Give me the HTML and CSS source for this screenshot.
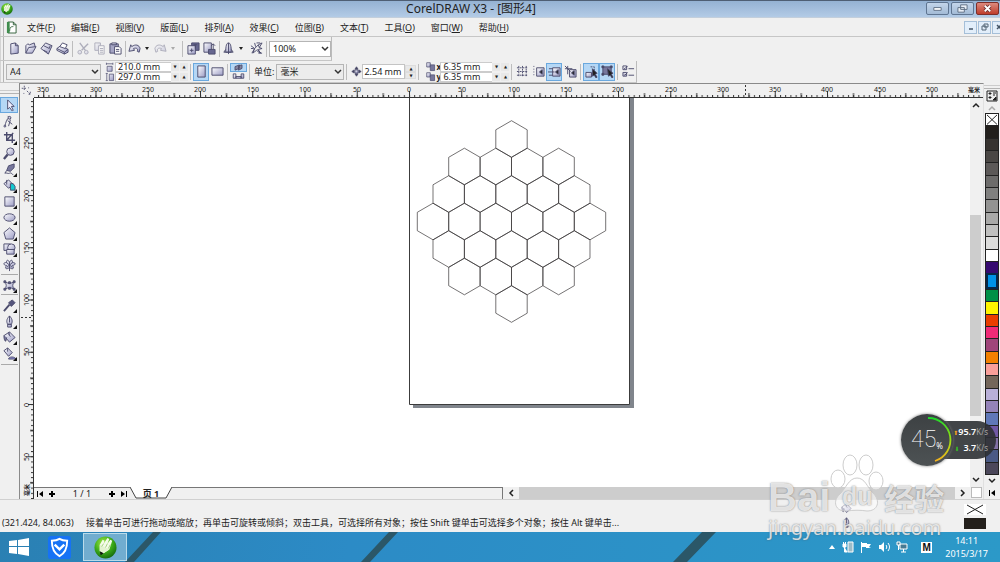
FILE: index.html
```html
<!DOCTYPE html>
<html lang="zh-CN">
<head>
<meta charset="utf-8">
<meta name="viewport" content="width=device-width, initial-scale=1">
<title>CorelDRAW X3 - [图形4]</title>
<link rel="stylesheet" href="styles.css">
</head>
<body>
<svg class="defs" aria-hidden="true">
  <defs>
    <linearGradient id="metal" x1="0" y1="0" x2="1" y2="1"><stop offset="0" stop-color="#fff"/><stop offset="1" stop-color="#9a9ac4"/></linearGradient>
    <radialGradient id="green" cx=".4" cy=".3" r=".8"><stop offset="0" stop-color="#a6e84a"/><stop offset=".5" stop-color="#3fae1c"/><stop offset="1" stop-color="#0c5c08"/></radialGradient>
    <linearGradient id="arc" x1="0" y1="0" x2="0" y2="1"><stop offset="0" stop-color="#1fd62c"/><stop offset=".5" stop-color="#9be012"/><stop offset="1" stop-color="#f5b11d"/></linearGradient>
  </defs>
  <symbol id="corel" viewBox="0 0 24 24"><circle cx="12" cy="12" r="11.5" fill="url(#green)"/><path d="M6 9l3-5 2 1-1 3 4-6 2 1-2 5 3-4 2 1-3 9-6 4-4-2z" fill="#f4fbe9"/><path d="M6 9l10 5-6 4-4-2z" fill="#e3f3d0"/><path d="M10 8l-2 3M14 8l-2 4M17 9l-2 4" stroke="#7fbf4f" stroke-width=".7"/><path d="M6 16l4 2-3 2z" fill="#111"/></symbol>
  <symbol id="doc" viewBox="0 0 12 14"><path d="M2 1h6l3 3v9H2z" fill="#fff" stroke="#2c5c34"/><path d="M8 1v3h3M4 11c0-4 1-5 4-5" fill="none" stroke="#2c5c34"/><path d="M1 1h3v12H1z" fill="#3f8c4d"/></symbol>
  <symbol id="chev" viewBox="0 0 8 8"><path d="M1 2l3 3 3-3" fill="none" stroke="currentColor" stroke-width="1.5"/></symbol>
  <symbol id="new" viewBox="0 0 14 14"><path d="M3 2l5-1 3 3v8l-8 1z"/><path d="M8 1v3h3" fill="none"/></symbol>
  <symbol id="open" viewBox="0 0 14 14"><path d="M2 12V4l2-2 2 1 5-2 1 4"/><path d="M2 12L5 6l8-1-4 7z"/></symbol>
  <symbol id="save" viewBox="0 0 14 14"><path d="M1 7l5-6 7 3-4 9z"/><path d="M4 4l6 3 1-3M4 9l4 2" fill="none"/></symbol>
  <symbol id="print" viewBox="0 0 14 14"><path d="M1 7l4-3 8 4v3l-4 2-8-4z"/><path d="M4 5l3-4 5 2-2 4z" fill="#fff"/><path d="M1 7l8 4 4-3M9 11v2" fill="none"/></symbol>
  <symbol id="cut" viewBox="0 0 14 14"><path d="M3 1l6 8M12 2L5 9" fill="none" stroke-width="1.500"/><circle cx="3" cy="11" r="2"/><circle cx="10" cy="11" r="2"/></symbol>
  <symbol id="copy" viewBox="0 0 14 14"><path d="M2 1h6v8H2z"/><path d="M6 4h6v9H6z" fill="#fff"/><path d="M7.500 7H11M7.500 9H11M7.500 11H11"/></symbol>
  <symbol id="paste" viewBox="0 0 14 14"><path d="M1 2h9v10H1z" fill="#a5a5c4"/><path d="M3 1h5v2H3z"/><path d="M6 5h5l2 2v6H6z" fill="#fff"/><path d="M7.500 8H11M7.500 10H11"/></symbol>
  <symbol id="undo" viewBox="0 0 14 14"><path d="M1 10l2-7 1 2c4-3 8-2 9 2l-1 4-2-1c1-3-1-4-4-3l1 2z"/></symbol>
  <symbol id="redo" viewBox="0 0 14 14"><path d="M13 10l-2-7-1 2C6 2 2 3 1 7l1 4 2-1C3 7 5 6 8 7l-1 2z"/></symbol>
  <symbol id="import" viewBox="0 0 14 14"><path d="M5 1h8v8H5z" fill="#66668f"/><path d="M1 4h8v9H1z"/><path d="M3 9h4M5 7v4M7 3h4M9 3v4" fill="none"/></symbol>
  <symbol id="export" viewBox="0 0 14 14"><path d="M1 1h8v10H1z"/><path d="M6 8h7v5H6z" fill="#66668f"/><path d="M11 8V2M9 4l2-2 2 2" fill="none"/></symbol>
  <symbol id="launch" viewBox="0 0 14 14"><path d="M4 11C4 4 5 1 7 1s3 3 3 10z"/><path d="M7 1v10M4 8l-2 3h10l-2-3M7 11v2" fill="none"/></symbol>
  <symbol id="web" viewBox="0 0 14 14"><path d="M1 4l4 3-3 5M5 1l1 4M5 7l4-4 4-2-3 5 3 1-4 1 2 4-4-3-4 3zM9 3l1 3M8 8l4 4M1 7h3M7 1h4M9 12h4" fill="none"/></symbol>
  <symbol id="pw" viewBox="0 0 14 14"><path d="M2 1v3M11 1v3M2 2.500h9M3 6h7v7H3z"/></symbol>
  <symbol id="ph" viewBox="0 0 14 14"><path d="M1 2h3M1 12h3M2.500 2v10M6 3h6v9H6z"/></symbol>
  <symbol id="portrait" viewBox="0 0 14 14"><path d="M3 1h8v12H3z"/></symbol>
  <symbol id="landscape" viewBox="0 0 14 14"><path d="M1 3h12v8H1z"/></symbol>
  <symbol id="pages1" viewBox="0 0 14 8"><path d="M3 3l5-2v4L3 7zM7 2l4-1v4L7 7z" fill="#85859f"/></symbol>
  <symbol id="pages2" viewBox="0 0 14 8"><path d="M1 1h3v5H1zM10 1h3v5h-3zM4 4h6v2H4z"/></symbol>
  <symbol id="nudge" viewBox="0 0 14 14"><path d="M5 5h4v4H5z"/><path d="M7 1l2 3H5zM7 13l2-3H5zM1 7l3-2v4zM13 7l-3-2v4z" fill="#44445c"/></symbol>
  <symbol id="dup" viewBox="0 0 14 14"><path d="M1 1h5v6H1z"/><path d="M6 4h6v8H6z" fill="#77779c"/></symbol>
  <symbol id="grid" viewBox="0 0 14 14"><path d="M3 1v12M7 1v12M11 1v12M1 3h12M1 7h12M1 11h12" fill="none" stroke-dasharray="2 1"/></symbol>
  <symbol id="snapg" viewBox="0 0 14 14"><path d="M2 1v12" stroke-dasharray="1 2"/><path d="M5 3h8v9H5z"/><path d="M11 5v5L8 7.500z" fill="#222"/></symbol>
  <symbol id="snapo" viewBox="0 0 14 14"><path d="M5 3h8v9H5z"/><path d="M11 5v5L8 7.500z" fill="#222"/><path d="M1 4h4M0 7.500h7M1 11h4" fill="none"/></symbol>
  <symbol id="dyn" viewBox="0 0 14 14"><path d="M6 5h7v8H6z"/><path d="M11 6v5L8 8.500z" fill="#222"/><path d="M4 1v9M1 4h8M1 1l6 6" fill="none"/></symbol>
  <symbol id="treat" viewBox="0 0 14 14"><path d="M1 8h6v5H1z"/><path d="M6 2h4v5" fill="none" stroke-dasharray="2 1"/><path d="M8 4l5 5-2 1 2 3-1 1-2-3-2 1z" fill="#222"/></symbol>
  <symbol id="outl" viewBox="0 0 14 14"><path d="M2 2h9v8H2z" fill="#77779c"/><path d="M1 1h2v2H1zM10 1h2v2h-2zM1 9h2v2H1z" fill="#44445c"/><path d="M7 4l6 5-2 1 2 3-1 1-2-3-2 1z" fill="#222"/></symbol>
  <symbol id="opts" viewBox="0 0 14 14"><path d="M1 1h4v4H1zM1 8h4v4H1zM7 4h6M7 11h6M2 3l1 1 3-3M2 10l1 1 3-3"/></symbol>
  <symbol id="pick" viewBox="0 0 14 14"><path d="M5 1v10l2-2 3 4 1-1-2-4h3z" fill="#eef"/></symbol>
  <symbol id="shape" viewBox="0 0 14 14"><path d="M2 12C3 8 4 4 7 2M5 1l3 3M5 6l5 4M8 5l-2 7" fill="none"/><circle cx="2" cy="12" r="1"/><circle cx="7" cy="3" r="1.500"/></symbol>
  <symbol id="crop" viewBox="0 0 14 14"><path d="M4 1v9h9M1 4h9v9M4 10l7-8" fill="none" stroke-width="1.500"/></symbol>
  <symbol id="zoom" viewBox="0 0 14 14"><path d="M5 8l-4 5" stroke-width="2.500"/><circle cx="8" cy="5" r="4"/></symbol>
  <symbol id="free" viewBox="0 0 14 14"><path d="M12 1L6 3 4 8l4 1 4-4z" fill="#77779c"/><path d="M4 8l-2 3c2-1 3 1 5 0s3 1 4 2" fill="none"/></symbol>
  <symbol id="smart" viewBox="0 0 14 14"><path d="M1 5l5-4 5 5-5 4z"/><path d="M8 5h3l2 3v4H8z" fill="#13c9d0"/><path d="M4 1v5" fill="none"/></symbol>
  <symbol id="rect" viewBox="0 0 14 14"><path d="M2 2h10v10H2z"/></symbol>
  <symbol id="ell" viewBox="0 0 14 14"><ellipse cx="7" cy="7" rx="6" ry="4"/></symbol>
  <symbol id="poly" viewBox="0 0 14 14"><path d="M7 1l6 5-2 7H3L1 6z"/></symbol>
  <symbol id="basic" viewBox="0 0 14 14"><path d="M1 1h7v7H1z"/><circle cx="9" cy="5" r="4"/><path d="M4 7h8v5H4z"/></symbol>
  <symbol id="flower" viewBox="0 0 14 14"><path d="M7 4c-1-4-4-3-3 0-4-1-4 3 0 3-3 3 0 5 3 2 3 3 6 1 3-2 4 0 4-4 0-3 1-3-2-4-3 0zM7 4v9M4 4l6 5M10 4L4 9"/></symbol>
  <symbol id="env" viewBox="0 0 14 14"><path d="M2 3c3 2 7 2 10 0-2 3-2 5 0 8-3-2-7-2-10 0 2-3 2-5 0-8z"/><path d="M1 2h2v2H1zM11 2h2v2h-2zM1 10h2v2H1zM11 10h2v2h-2zM6 3h2v2H6zM6 9h2v2H6z" fill="#66668a"/></symbol>
  <symbol id="drop" viewBox="0 0 14 14"><path d="M1 13l6-7" stroke-width="2"/><path d="M6 4l4-3 3 3-4 4z" fill="#55557c"/></symbol>
  <symbol id="pen" viewBox="0 0 14 14"><path d="M7 1c4 4 3 7 2 9H5C4 8 3 5 7 1zM7 1v7M5 10h4v3H5z"/></symbol>
  <symbol id="fill" viewBox="0 0 14 14"><path d="M1 5l6-4 6 6-6 5z"/><path d="M1 5c0 4 1 6 2 6l1-4M7 1c-2 2 0 4 1 5" fill="#77779c"/></symbol>
  <symbol id="ifill" viewBox="0 0 14 14"><path d="M1 4l4-3 5 5-4 4z"/><path d="M6 13c0-3 7-3 8 0z" fill="#8b8bd0"/><path d="M5 1v4" fill="none"/></symbol>
</svg>

<header class="titlebar">
  <svg class="logo"><use href="#corel"/></svg>
  <h1>CorelDRAW X3 - [图形4]</h1>
  <div class="winbtns">
    <button aria-label="最小化"><svg viewBox="0 0 12 12"><path d="M2 5h8v3H2z" fill="#fff" stroke="#5b6b80"/></svg></button>
    <button aria-label="还原"><svg viewBox="0 0 12 12"><path d="M4 2h7v5H4zM1 5h7v5H1z" fill="#e8eef6" stroke="#5b6b80"/></svg></button>
    <button class="close" aria-label="关闭"><svg viewBox="0 0 12 12"><path d="M3 3l6 6M9 3L3 9" stroke="#703030" stroke-width="4"/><path d="M3 3l6 6M9 3L3 9" stroke="#fff" stroke-width="2"/></svg></button>
  </div>
</header>

<nav class="menubar">
  <i class="grip"></i>
  <svg class="docicon"><use href="#doc"/></svg>
  <div class="menus">
    <button>文件(<u>F</u>)</button><button>编辑(<u>E</u>)</button><button>视图(<u>V</u>)</button><button>版面(<u>L</u>)</button><button>排列(<u>A</u>)</button><button>效果(<u>C</u>)</button><button>位图(<u>B</u>)</button><button>文本(<u>T</u>)</button><button>工具(<u>O</u>)</button><button>窗口(<u>W</u>)</button><button>帮助(<u>H</u>)</button>
  </div>
  <div class="docbtns">
    <button aria-label="最小化文档"><svg viewBox="0 0 10 10"><path d="M3 7h4" stroke="#456" stroke-width="1.500"/></svg></button>
    <button aria-label="还原文档"><svg viewBox="0 0 10 10"><path d="M4 2h4v3H4zM2 4h4v4H2z" fill="#dde9f5" stroke="#567"/></svg></button>
    <button aria-label="关闭文档"><svg viewBox="0 0 10 10"><path d="M3 3l4 4M7 3L3 7" stroke="#456" stroke-width="1.500"/></svg></button>
  </div>
</nav>

<div class="toolbar standard">
  <i class="grip"></i>
  <button aria-label="新建"><svg class="ic"><use href="#new"/></svg></button>
  <button aria-label="打开"><svg class="ic"><use href="#open"/></svg></button>
  <button aria-label="保存"><svg class="ic"><use href="#save"/></svg></button>
  <button aria-label="打印"><svg class="ic"><use href="#print"/></svg></button>
  <i class="sep"></i>
  <button aria-label="剪切" disabled><svg class="ic"><use href="#cut"/></svg></button>
  <button aria-label="复制" disabled><svg class="ic"><use href="#copy"/></svg></button>
  <button aria-label="粘贴"><svg class="ic"><use href="#paste"/></svg></button>
  <i class="sep"></i>
  <button class="drop" aria-label="撤消"><svg class="ic"><use href="#undo"/></svg><i class="tri"></i></button>
  <button class="drop" aria-label="重做" disabled><svg class="ic"><use href="#redo"/></svg><i class="tri"></i></button>
  <i class="sep"></i>
  <button aria-label="导入"><svg class="ic"><use href="#import"/></svg></button>
  <button aria-label="导出"><svg class="ic"><use href="#export"/></svg></button>
  <i class="sep"></i>
  <button class="drop" aria-label="应用程序启动器"><svg class="ic"><use href="#launch"/></svg><i class="tri"></i></button>
  <button aria-label="在线社区"><svg class="ic"><use href="#web"/></svg></button>
  <i class="sep"></i>
  <span class="combo white zoomlevel"><select aria-label="缩放级别"><option>100%</option></select><svg><use href="#chev"/></svg></span>
</div>

<div class="toolbar props">
  <i class="grip"></i>
  <span class="combo paper"><select aria-label="纸张类型"><option>A4</option></select><svg><use href="#chev"/></svg></span>
  <div class="pair">
    <label><svg class="ic"><use href="#pw"/></svg><input aria-label="纸张宽度" value="210.0 mm"><span class="spin"><b>▼</b><b>▲</b></span></label>
    <label><svg class="ic"><use href="#ph"/></svg><input aria-label="纸张高度" value="297.0 mm"><span class="spin"><b>▼</b><b>▲</b></span></label>
  </div>
  <i class="sep"></i>
  <button class="on" aria-label="纵向"><svg class="ic"><use href="#portrait"/></svg></button>
  <button aria-label="横向"><svg class="ic"><use href="#landscape"/></svg></button>
  <i class="sep"></i>
  <div class="stack">
    <button class="on" aria-label="所有页面"><svg class="ic"><use href="#pages1"/></svg></button>
    <button aria-label="当前页面"><svg class="ic"><use href="#pages2"/></svg></button>
  </div>
  <i class="sep"></i>
  <label class="unitlabel" for="unit">单位:</label>
  <span class="combo unit"><select id="unit"><option>毫米</option></select><svg><use href="#chev"/></svg></span>
  <i class="sep"></i>
  <label class="nudge"><svg class="ic"><use href="#nudge"/></svg><input aria-label="微调偏移" value="2.54 mm"><span class="spin tall"><b>▲</b><b>▼</b></span></label>
  <i class="sep"></i>
  <div class="pair dup">
    <label><svg class="ic"><use href="#dup"/></svg><em>x</em><input aria-label="再制距离 x" value="6.35 mm"><span class="spin"><b>▼</b><b>▲</b></span></label>
    <label><svg class="ic"><use href="#dup"/></svg><em>y</em><input aria-label="再制距离 y" value="6.35 mm"><span class="spin"><b>▼</b><b>▲</b></span></label>
  </div>
  <i class="sep"></i>
  <button aria-label="贴齐网格"><svg class="ic"><use href="#grid"/></svg></button>
  <button aria-label="贴齐辅助线"><svg class="ic"><use href="#snapg"/></svg></button>
  <button class="on" aria-label="贴齐对象"><svg class="ic"><use href="#snapo"/></svg></button>
  <button aria-label="动态导线"><svg class="ic"><use href="#dyn"/></svg></button>
  <i class="sep"></i>
  <button class="on" aria-label="移动时绘制"><svg class="ic"><use href="#treat"/></svg></button>
  <button class="on" aria-label="视为已填充"><svg class="ic"><use href="#outl"/></svg></button>
  <i class="sep"></i>
  <button aria-label="选项"><svg class="ic"><use href="#opts"/></svg></button>
</div>

<main class="work">
  <aside class="toolbox">
    <i class="hgrip"></i>
    <button class="on" aria-label="挑选"><svg class="ic"><use href="#pick"/></svg></button>
    <button class="fly" aria-label="形状"><svg class="ic"><use href="#shape"/></svg></button>
    <button class="fly" aria-label="裁剪"><svg class="ic"><use href="#crop"/></svg></button>
    <button class="fly" aria-label="缩放"><svg class="ic"><use href="#zoom"/></svg></button>
    <button class="fly" aria-label="手绘"><svg class="ic"><use href="#free"/></svg></button>
    <button class="fly" aria-label="智能填充"><svg class="ic"><use href="#smart"/></svg></button>
    <button class="fly" aria-label="矩形"><svg class="ic"><use href="#rect"/></svg></button>
    <button class="fly" aria-label="椭圆"><svg class="ic"><use href="#ell"/></svg></button>
    <button class="fly" aria-label="多边形"><svg class="ic"><use href="#poly"/></svg></button>
    <button class="fly" aria-label="基本形状"><svg class="ic"><use href="#basic"/></svg></button>
    <button aria-label="文本"><svg class="ic"><use href="#flower"/></svg></button>
    <i class="hsep"></i>
    <button class="fly" aria-label="交互式封套"><svg class="ic"><use href="#env"/></svg></button>
    <i class="hsep"></i>
    <button class="fly" aria-label="滴管"><svg class="ic"><use href="#drop"/></svg></button>
    <button class="fly" aria-label="轮廓"><svg class="ic"><use href="#pen"/></svg></button>
    <button class="fly" aria-label="填充"><svg class="ic"><use href="#fill"/></svg></button>
    <button class="fly" aria-label="交互式填充"><svg class="ic"><use href="#ifill"/></svg></button>
    <i class="hsep last"></i>
  </aside>

  <section class="frame">
    <div class="corner"><svg class="ic" viewBox="0 0 14 14"><path d="M2 5h6M5 2v6M8 8l4 4M12 9v3H9M10 4v1M4 11h1" fill="none" stroke-dasharray="2 1"/></svg></div>
    <svg class="hruler" role="img" aria-label="水平标尺">
      <defs>
        <pattern id="hminor" x="375" width="5.225" height="14" patternUnits="userSpaceOnUse"><path d="M.5 11v3" stroke="#333"/></pattern>
        <pattern id="hmajor" x="375" width="52.250" height="14" patternUnits="userSpaceOnUse"><path d="M.5 7v7M26.500 9v5" stroke="#333"/></pattern>
      </defs>
      <rect width="100%" height="14" fill="url(#hminor)"/><rect width="100%" height="14" fill="url(#hmajor)"/>
      <path d="M711.500 1v13" stroke="#333" stroke-dasharray="2 2"/>
      <g class="ticks"><text x="9" y="8">350</text><text x="62" y="8">300</text><text x="114" y="8">250</text><text x="166" y="8">200</text><text x="219" y="8">150</text><text x="271" y="8">100</text><text x="323" y="8">50</text><text x="375" y="8">0</text><text x="428" y="8">50</text><text x="480" y="8">100</text><text x="532" y="8">150</text><text x="584" y="8">200</text><text x="637" y="8">250</text><text x="689" y="8">300</text><text x="741" y="8">350</text><text x="793" y="8">400</text><text x="846" y="8">450</text><text x="898" y="8">500</text><text class="rulerunit" x="940" y="8">毫米</text></g>
    </svg>
    <svg class="vruler" role="img" aria-label="垂直标尺">
      <defs>
        <pattern id="vminor" y="306" width="14" height="5.225" patternUnits="userSpaceOnUse"><path d="M11 .5h3" stroke="#333"/></pattern>
        <pattern id="vmajor" y="306" width="14" height="52.250" patternUnits="userSpaceOnUse"><path d="M8 .5h6M10 26.500h4" stroke="#333"/></pattern>
      </defs>
      <rect width="14" height="100%" fill="url(#vminor)"/><rect width="14" height="100%" fill="url(#vmajor)"/>
      <path d="M1 219.500h13" stroke="#333" stroke-dasharray="2 2"/>
      <g class="ticks"><text transform="translate(9 45) rotate(-90)">250</text><text transform="translate(9 98) rotate(-90)">200</text><text transform="translate(9 150) rotate(-90)">150</text><text transform="translate(9 202) rotate(-90)">100</text><text transform="translate(9 254) rotate(-90)">50</text><text transform="translate(9 307) rotate(-90)">0</text><text transform="translate(9 359) rotate(-90)">50</text><text class="rulerunit" transform="translate(9 392) rotate(-90)">毫米</text></g>
    </svg>
    <svg class="canvas" role="img" aria-label="蜂窝六边形图案">
      <path d="M595 0h5v310H379v-4h216z" fill="#80858c"/>
      <path d="M375.500-1V306.500H595.500V-1" fill="#fff" stroke="#3c3c3c"/>
      <defs><path id="h" d="M0-18.300L15.700-9.200V9.200L0 18.300-15.700 9.200V-9.200z" fill="none" stroke="#3a3638" stroke-width=".7"/></defs>
      <use href="#h" x="477.500" y="41"/>
      <use href="#h" x="430.400" y="68.500"/><use href="#h" x="461.800" y="68.500"/><use href="#h" x="493.200" y="68.500"/><use href="#h" x="524.600" y="68.500"/>
      <use href="#h" x="414.700" y="96"/><use href="#h" x="446.100" y="96"/><use href="#h" x="477.500" y="96"/><use href="#h" x="508.900" y="96"/><use href="#h" x="540.300" y="96"/>
      <use href="#h" x="399" y="123.500"/><use href="#h" x="430.400" y="123.500"/><use href="#h" x="461.800" y="123.500"/><use href="#h" x="493.200" y="123.500"/><use href="#h" x="524.600" y="123.500"/><use href="#h" x="556" y="123.500"/>
      <use href="#h" x="414.700" y="151"/><use href="#h" x="446.100" y="151"/><use href="#h" x="477.500" y="151"/><use href="#h" x="508.900" y="151"/><use href="#h" x="540.300" y="151"/>
      <use href="#h" x="430.400" y="178.500"/><use href="#h" x="461.800" y="178.500"/><use href="#h" x="493.200" y="178.500"/><use href="#h" x="524.600" y="178.500"/>
      <use href="#h" x="477.500" y="206"/>
    </svg>
    <div class="vscroll">
      <button aria-label="向上滚动"><svg class="flip"><use href="#chev"/></svg></button>
      <div class="track"><i></i></div>
      <button aria-label="向下滚动"><svg><use href="#chev"/></svg></button>
    </div>
    <div class="pagebar">
      <div class="pagenav">
        <button aria-label="首页"><svg viewBox="0 0 8 8"><path d="M1 1h1v6H1zM7 1v6L3 4z"/></svg></button>
        <button aria-label="前面加页"><svg viewBox="0 0 8 8"><path d="M3 1h2v2h2v2H5v2H3V5H1V3h2z"/></svg></button>
        <span>1 / 1</span>
        <button aria-label="后面加页"><svg viewBox="0 0 8 8"><path d="M3 1h2v2h2v2H5v2H3V5H1V3h2z"/></svg></button>
        <button aria-label="末页"><svg viewBox="0 0 8 8"><path d="M6 1h1v6H6zM1 1v6l4-3z"/></svg></button>
      </div>
      <button class="pagetab"><svg viewBox="0 0 42 12" preserveAspectRatio="none"><path d="M0 0h42l-6 11H6z" fill="#fff"/><path d="M0 0l6 11h30l6-11" fill="none" stroke="#444"/></svg><span>页 1</span></button>
      <i class="filler"></i>
      <button class="arrow" aria-label="向左滚动"><svg class="left"><use href="#chev"/></svg></button>
      <div class="htrack"></div>
      <button class="arrow" aria-label="向右滚动"><svg class="right"><use href="#chev"/></svg></button>
      <button class="navi" aria-label="导航器"></button>
    </div>
  </section>

  <aside class="palette">
    <i class="hgrip"></i>
    <button class="pmenu" aria-label="调色板菜单"><svg viewBox="0 0 12 12"><path d="M1 1h10v10H1z" fill="#eee" stroke="#222"/><path d="M3 3h2v1H3zM3 7h2v1H3zM7 3h3M7 5h2M7 10l3-3v3z" stroke="#222" fill="#222"/></svg></button>
    <button class="parrow dim" aria-label="上移"><svg class="flip"><use href="#chev"/></svg></button>
    <div class="swatches">
      <button class="none" aria-label="无颜色"><svg viewBox="0 0 12 12" preserveAspectRatio="none"><path d="M1 1l10 10M11 1L1 11" stroke="#222"/></svg></button>
      <i class="c1"></i><i class="c2"></i><i class="c3"></i><i class="c4"></i><i class="c5"></i><i class="c6"></i><i class="c7"></i><i class="c8"></i><i class="c9"></i><i class="c10"></i><i class="c11"></i><i class="c12"></i><i class="c13"></i><i class="c14"></i><i class="c15"></i><i class="c16"></i><i class="c17"></i><i class="c18"></i><i class="c19"></i><i class="c20"></i><i class="c21"></i><i class="c22"></i><i class="c23"></i><i class="c24"></i><i class="c25"></i><i class="c26"></i><i class="c27"></i><i class="c28"></i>
    </div>
    <button class="parrow" aria-label="下移"><svg><use href="#chev"/></svg></button>
    <button class="parrow" aria-label="展开"><svg viewBox="0 0 8 8"><path d="M1 1h1v6H1zM7 1v6L3 4z"/></svg></button>
  </aside>
</main>

<footer class="status">
  <span class="coords">(321.424, 84.063)</span>
  <span class="hint">接着单击可进行拖动或缩放；再单击可旋转或倾斜；双击工具，可选择所有对象；按住 Shift 键单击可选择多个对象；按住 Alt 键单击...</span>
  <div class="inks"><svg class="ic"><use href="#fill"/></svg><svg class="ic"><use href="#pen"/></svg></div>
  <div class="fills"><svg viewBox="0 0 22 11"><path d="M0 0h22v11H0z" fill="#fff"/><path d="M3 1l16 9M19 1L3 10" stroke="#222"/></svg><i></i></div>
</footer>

<div class="taskbar">
  <svg class="stripes" aria-hidden="true"><path d="M153 0h8l-27 30h-9zM389 0h9l-28 30h-9zM702 0h14l-29 30h-14z" fill="#2b5768"/></svg>
  <button class="start" aria-label="开始"><svg viewBox="0 0 20 18"><path d="M0 3l8-1v6H0zM9 2l11-2v8H9zM0 9h8v7l-8-1zM9 9h11v9L9 16z" fill="#fff"/></svg></button>
  <button class="app" aria-label="安全卫士"><svg viewBox="0 0 24 24"><rect width="24" height="24" rx="3" fill="#1672f5"/><path d="M12 3c3 2 5 2 8 2 0 8-2 13-8 16C6 18 4 13 4 5c3 0 5 0 8-2z" fill="none" stroke="#fff" stroke-width="2"/><path d="M7 9l5 5 5-5" fill="none" stroke="#fff" stroke-width="2.500"/></svg></button>
  <button class="app active" aria-label="CorelDRAW"><svg><use href="#corel"/></svg></button>
  <div class="tray">
    <svg class="tiny" viewBox="0 0 8 8"><path d="M1 6l3-4 3 4z" fill="#fff"/></svg>
    <svg viewBox="0 0 12 12"><path d="M6 1h5v10H6z" fill="#9dbcc8" stroke="#fff"/><path d="M1 3h3v3H1zM2.500 6v5h3M1.500 1v2M3.500 1v2" fill="#fff" stroke="#fff"/></svg>
    <svg viewBox="0 0 12 12"><path d="M1.500 1v11" stroke="#fff"/><path d="M2 2h5v1h4L9 6l2 1H6V6H2z" fill="#fff"/></svg>
    <svg viewBox="0 0 12 12"><path d="M1 4h2l3-3v10L3 8H1z" fill="#fff"/><path d="M8 4c1 1 1 3 0 4M10 2c2 3 2 5 0 8" fill="none" stroke="#fff"/></svg>
    <svg viewBox="0 0 12 12"><path d="M4 3h7v5H4zM5 11h5M7.500 8v3M1 1h3v3H1zM2.500 4v5" fill="#477a92" stroke="#fff"/></svg>
    <span class="ime">M</span>
    <time><span>14:11</span><span>2015/3/17</span></time>
  </div>
</div>

<div class="gadget">
  <div class="dial"><svg viewBox="0 0 52 52" aria-hidden="true"><path d="M27 4A22 22 0 0 1 34 47" fill="none" stroke="url(#arc)" stroke-width="1.800"/></svg><strong>45</strong><small>%</small></div>
  <div class="speeds">
    <span><b class="up">⬆</b>95.7<small>K/s</small></span>
    <span><b class="down">⬇</b>3.7<small>K/s</small></span>
  </div>
</div>

<div class="watermark">
  <div class="brand">
    <span class="bai">Bai</span>
    <span class="paw"><svg viewBox="0 0 54 58" aria-hidden="true"><g fill="#fff" fill-opacity=".55" stroke="#cdcdcd"><ellipse cx="8" cy="25" rx="7" ry="9"/><ellipse cx="20" cy="11" rx="7" ry="10"/><ellipse cx="36" cy="11" rx="7" ry="10"/><ellipse cx="46" cy="27" rx="7" ry="9"/><path d="M27 24c8 0 10 9 16 15 8 8 5 18-6 18-6-1-14-1-20 0C5 58 2 47 10 40c6-6 9-16 17-16z"/></g></svg><span>du</span></span>
    <span class="jy">经验</span>
  </div>
  <div class="url">jingyan.baidu.com</div>
</div>
</body>
</html>
```
FILE: styles.css
```css
* { box-sizing: border-box; }
html, body { height: 100%; }
body {
  margin: 0;
  display: flex;
  flex-direction: column;
  position: relative;
  overflow: hidden;
  background: #f0f0f0;
  color: #222;
  font: 9px/12px "Noto Sans", "Noto Sans CJK SC", sans-serif;
}
button, input, select { font: inherit; color: inherit; margin: 0; padding: 0; border: 0; background: none; border-radius: 0; min-width: 0; }
button { display: flex; align-items: center; justify-content: center; }
select { appearance: none; outline: 0; }
svg { display: block; }
.defs { position: absolute; width: 0; height: 0; }
.ic { width: 13px; height: 13px; fill: url(#metal); stroke: #4b4b6c; stroke-width: 1; flex: none; }
button:disabled .ic { opacity: .4; }

.titlebar {
  flex: none;
  height: 18px;
  display: grid;
  grid-template-columns: 80px 1fr 80px;
  align-items: center;
  border-top: 1px solid #4f5f74;
  border-bottom: 1px solid #c3cfdc;
  background: linear-gradient(#95b2d3, #b3cbe6);
}
.logo { width: 12px; height: 12px; margin-left: 1px; }
.titlebar h1 { margin: 0; text-align: center; font-size: 12px; line-height: 16px; font-weight: 400; padding-right: 58px; }
.winbtns { display: flex; gap: 2px; justify-content: flex-end; align-self: start; padding: 1px 1px 0 0; }
.winbtns button { width: 23px; height: 13px; border: 1px solid #5f7591; border-radius: 2px; background: linear-gradient(#c3d5ea, #a3bbd6); }
.winbtns .close { background: linear-gradient(#dd8a7e, #bf3d2b); border-color: #7d2f2a; }
.winbtns svg { width: 11px; height: 11px; }

.menubar { flex: none; height: 19px; display: flex; align-items: center; border-bottom: 1px solid #c6c6c6; }
.grip { flex: none; width: 4px; align-self: stretch; border-left: 1px solid #d4d4d4; border-right: 1px solid #b4b4b4; }
.docicon { width: 11px; height: 13px; margin-left: 2px; }
.menus { flex: 1; display: flex; gap: 16px; margin-left: 10px; padding-top: 1px; }
.docbtns { display: flex; gap: 1px; overflow: hidden; width: 36px; }
.docbtns button { flex: none; width: 13px; height: 13px; border: 1px solid #a5bfd8; background: #e2eefa; }
.docbtns svg { width: 10px; height: 10px; }

.toolbar { flex: none; align-self: flex-start; display: flex; align-items: center; border-right: 1px solid #bbb; border-bottom: 1px solid #c6c6c6; }
.toolbar > button { width: 16px; height: 18px; flex: none; }
.toolbar .on, .toolbox .on { background: #b5d7f5; border: 1px solid #6aa8de; }
.toolbar .drop { width: 26px; gap: 4px; justify-content: flex-start; }
.sep { flex: none; width: 1px; height: 16px; margin: 0 2px; background: #bdbdbd; }
.tri { border: 2px solid transparent; border-top: 3px solid #222; border-bottom: 0; }
button:disabled .tri { border-top-color: #aaa; }
.standard { height: 24px; }
.standard .grip { margin-right: 2px; }
.combo { display: grid; align-items: center; border: 1px solid #b5b5b5; background: #ececec; height: 16px; flex: none; }
.combo select { grid-area: 1 / 1; width: 100%; height: 14px; padding-left: 3px; line-height: 14px; }
.combo svg { grid-area: 1 / 1; justify-self: end; width: 8px; height: 8px; margin-right: 1px; color: #333; pointer-events: none; }
.white { background: #fff; }
.zoomlevel { width: 62px; }
.props { height: 22px; }
.props .grip { margin-right: 2px; }
.paper { width: 95px; margin-right: 4px; }
.unit { width: 68px; }
.unitlabel { padding: 0 2px; }
.pair { display: flex; flex-direction: column; }
.pair label, .nudge { display: flex; align-items: center; }
.pair .ic { width: 10px; height: 10px; }
.pair input { width: 56px; height: 10px; padding-left: 2px; background: #fff; border: 1px solid #ccc; border-right: 0; line-height: 8px; }
.dup { margin-left: 5px; }
.dup em { width: 4px; font: 700 8px/8px "Noto Sans", sans-serif; }
.dup input { width: 52px; }
.spin { display: flex; gap: 1px; }
.spin b { width: 8px; height: 8px; font: 4px/8px "DejaVu Sans", sans-serif; text-align: center; background: #e8e8e8; }
.stack { display: flex; flex-direction: column; }
.stack button { width: 17px; height: 9px; }
.stack .ic { width: 13px; height: 7px; }
.nudge { margin-left: 2px; }
.nudge .ic { width: 11px; height: 11px; }
.nudge input { width: 43px; height: 15px; padding-left: 1px; background: #fff; border: 1px solid #c4c4c4; }
.nudge .spin { flex-direction: column; gap: 0; }
.nudge .spin b { width: 11px; height: 7px; border: 1px solid #ddd; line-height: 5px; }

.work { flex: 1; min-height: 0; display: flex; border-bottom: 1px solid #d0d0d0; }
.toolbox { flex: none; width: 19px; display: flex; flex-direction: column; padding-top: 7px; }
.hgrip { flex: none; height: 4px; border-top: 1px solid #ccc; border-bottom: 1px solid #b4b4b4; }
.toolbox .hgrip { margin-bottom: 3px; }
.toolbox button { position: relative; flex: none; width: 18px; height: 16px; }
.fly::after { content: ""; position: absolute; right: 1px; bottom: 0; border: 2px solid #111; border-top-color: transparent; border-left-color: transparent; }
.hsep { flex: none; height: 1px; margin: 1px 1px 2px; background: #aaa; }
.last { margin-top: 3px; }

.frame {
  flex: 1;
  min-width: 0;
  display: grid;
  grid-template: 14px 1fr 12px / 14px 1fr 13px;
  border: 1px solid #8a8a8a;
  border-right-color: #e0e0e0;
  border-bottom: 0;
}
.corner .ic { width: 12px; height: 12px; }
.hruler { grid-column: 2 / 4; width: 100%; height: 14px; border-bottom: 1px solid #333; }
.vruler { grid-row: 2 / 4; grid-column: 1; width: 14px; height: 100%; border-right: 1px solid #333; }
.ticks { font: 7px "Noto Sans", "Noto Sans CJK SC", sans-serif; text-anchor: middle; fill: #222; }
.rulerunit { font-size: 6px; font-weight: 700; }
.canvas { grid-area: 2 / 2; width: 100%; height: 100%; background: #fff; overflow: hidden; }
.vscroll { grid-area: 2 / 3; display: flex; flex-direction: column; width: 11px; }
.vscroll button { height: 14px; }
.vscroll svg, .parrow svg { width: 8px; height: 8px; }
.flip { transform: rotate(180deg); }
.left { transform: rotate(90deg); }
.right { transform: rotate(-90deg); }
.track { flex: 1; display: grid; grid-template-rows: 103fr 200fr 57fr; }
.track i { grid-row: 2; background: #cdcdcd; }
.pagebar { grid-area: 3 / 2 / 4 / 4; display: flex; min-width: 0; }
.pagenav { flex: none; display: flex; align-items: center; border-top: 1px solid #777; width: 96px; }
.pagenav button { width: 12px; height: 10px; }
.pagenav svg { width: 8px; height: 8px; }
.pagenav span { flex: 1; text-align: center; }
.pagetab { flex: none; display: grid; width: 42px; height: 12px; font-weight: 700; }
.pagetab svg { grid-area: 1 / 1; width: 42px; height: 12px; }
.pagetab span { grid-area: 1 / 1; line-height: 11px; z-index: 1; }
.filler { flex: 331; border-top: 1px solid #777; border-right: 1px solid #777; }
.arrow { flex: none; width: 16px; }
.arrow svg { width: 8px; height: 8px; }
.htrack { flex: 438; background: #cdcdcd; }
.navi { flex: none; width: 11px; height: 11px; background: #fff; border: 1px solid #bbb; margin-right: 1px; }

.palette { flex: none; width: 16px; display: flex; flex-direction: column; padding-top: 2px; }
.pmenu { height: 13px; }
.pmenu svg { width: 12px; height: 12px; }
.parrow { height: 12px; }
.parrow.dim { height: 11px; color: #aaa; }
.swatches { flex: 1; display: flex; flex-direction: column; margin: 0 1px; border: 1px solid #222; border-top: 0; }
.swatches > * { flex: 1; min-height: 0; border-top: 1px solid #222; }
.none { background: #fff; }
.none svg { width: 100%; height: 100%; }
.c1 { background: #221f1c; } .c2 { background: #373330; } .c3 { background: #4a4745; } .c4 { background: #5c5958; }
.c5 { background: #6d6c6b; } .c6 { background: #80807f; } .c7 { background: #939392; } .c8 { background: #a9a9a8; }
.c9 { background: #c0c0bf; } .c10 { background: #dcdcdb; } .c11 { background: #fff; } .c12 { background: #360a70; }
.swatches .c13 { background: #0091e6; border: 2px solid #06284a; } .c14 { background: #009047; } .c15 { background: #fff500; } .c16 { background: #ea3e00; }
.c17 { background: #f02a77; } .c18 { background: #a0457a; } .c19 { background: #f28000; } .c20 { background: #f99f9a; }
.c21 { background: #74665a; } .c22 { background: #b9b0d8; } .c23 { background: #9483b8; } .c24 { background: #6078b8; }
.c25 { background: #7058a5; } .c26 { background: #8070a5; } .c27 { background: #4a5a85; } .c28 { background: #4b475a; }

.status { flex: none; height: 32px; display: flex; align-items: flex-end; padding: 0 14px 2px 2px; }
.coords { flex: none; width: 84px; line-height: 14px; }
.hint { flex: none; line-height: 14px; white-space: nowrap; }
.inks { display: flex; flex-direction: column; gap: 3px; margin: 0 112px 2px auto; }
.inks .ic { width: 11px; height: 11px; }
.fills { display: flex; flex-direction: column; gap: 3px; width: 22px; padding-bottom: 1px; }
.fills svg, .fills i { width: 22px; height: 11px; }
.fills i { background: #231f1b; }

.taskbar { flex: none; height: 30px; position: relative; display: flex; align-items: center; background: linear-gradient(100deg, #2a80b3, #2c8bc6 35%, #2c99c8); color: #fff; }
.stripes { position: absolute; inset: 0; width: 100%; height: 100%; }
.taskbar > button { position: relative; height: 28px; }
.start { width: 37px; }
.start svg { width: 20px; height: 18px; }
.app { width: 44px; }
.app svg { width: 23px; height: 23px; }
.app.active { margin-left: 2px; background: rgba(200, 225, 235, .45); border: 1px solid #b9dbea; }
.tray { position: relative; margin-left: auto; display: flex; align-items: center; gap: 6px; padding-right: 12px; }
.tray svg { width: 12px; height: 12px; }
.tray .tiny { width: 8px; height: 8px; }
.ime { width: 11px; height: 11px; margin: 0 7px; background: #fff; color: #111; font: 700 10px/11px "Liberation Sans", sans-serif; text-align: center; }
time { display: flex; flex-direction: column; align-items: center; line-height: 13px; }

.gadget { position: absolute; right: 4px; top: 414px; display: flex; align-items: center; color: #fff; }
.dial { position: relative; z-index: 1; width: 52px; height: 52px; border-radius: 50%; background: linear-gradient(#3d4143, #4d5254); box-shadow: 0 0 3px #777; display: flex; align-items: center; justify-content: center; }
.dial svg { position: absolute; inset: 0; width: 52px; height: 52px; }
.dial strong { font: 100 23px/30px Roboto, "Open Sans", sans-serif; }
.dial small { font-size: 8px; align-self: flex-end; padding-bottom: 14px; }
.speeds { width: 55px; height: 38px; margin-left: -12px; padding: 3px 8px 3px 12px; border-radius: 0 19px 19px 0; background: rgba(45, 49, 52, .9); display: flex; flex-direction: column; align-items: flex-end; font-weight: 600; }
.speeds span { line-height: 16px; white-space: nowrap; }
.speeds small { font-size: 8px; font-weight: 400; color: #a5a5a5; }
.speeds b { font: 6px "DejaVu Sans", sans-serif; }
.up { color: #f5a623; }
.down { color: #35c322; margin-right: 4px; }

.watermark { position: absolute; right: 54px; bottom: 22px; width: 178px; color: rgba(255, 255, 255, .75); pointer-events: none; text-shadow: 0 0 1px rgba(100, 100, 100, .5), 0 0 2px rgba(100, 100, 100, .5); }
.brand { display: flex; align-items: flex-end; height: 60px; }
.bai { font: 700 40px/38px "Liberation Sans", sans-serif; }
.paw { position: relative; height: 58px; margin-bottom: 4px; }
.paw svg { width: 54px; height: 58px; }
.paw span { position: absolute; left: 0; right: 0; bottom: 2px; text-align: center; font: 700 25px/28px "Liberation Sans", sans-serif; }
.jy { font: 700 30px/38px "Noto Sans CJK SC", sans-serif; }
.url { font-size: 20px; line-height: 24px; }
```
